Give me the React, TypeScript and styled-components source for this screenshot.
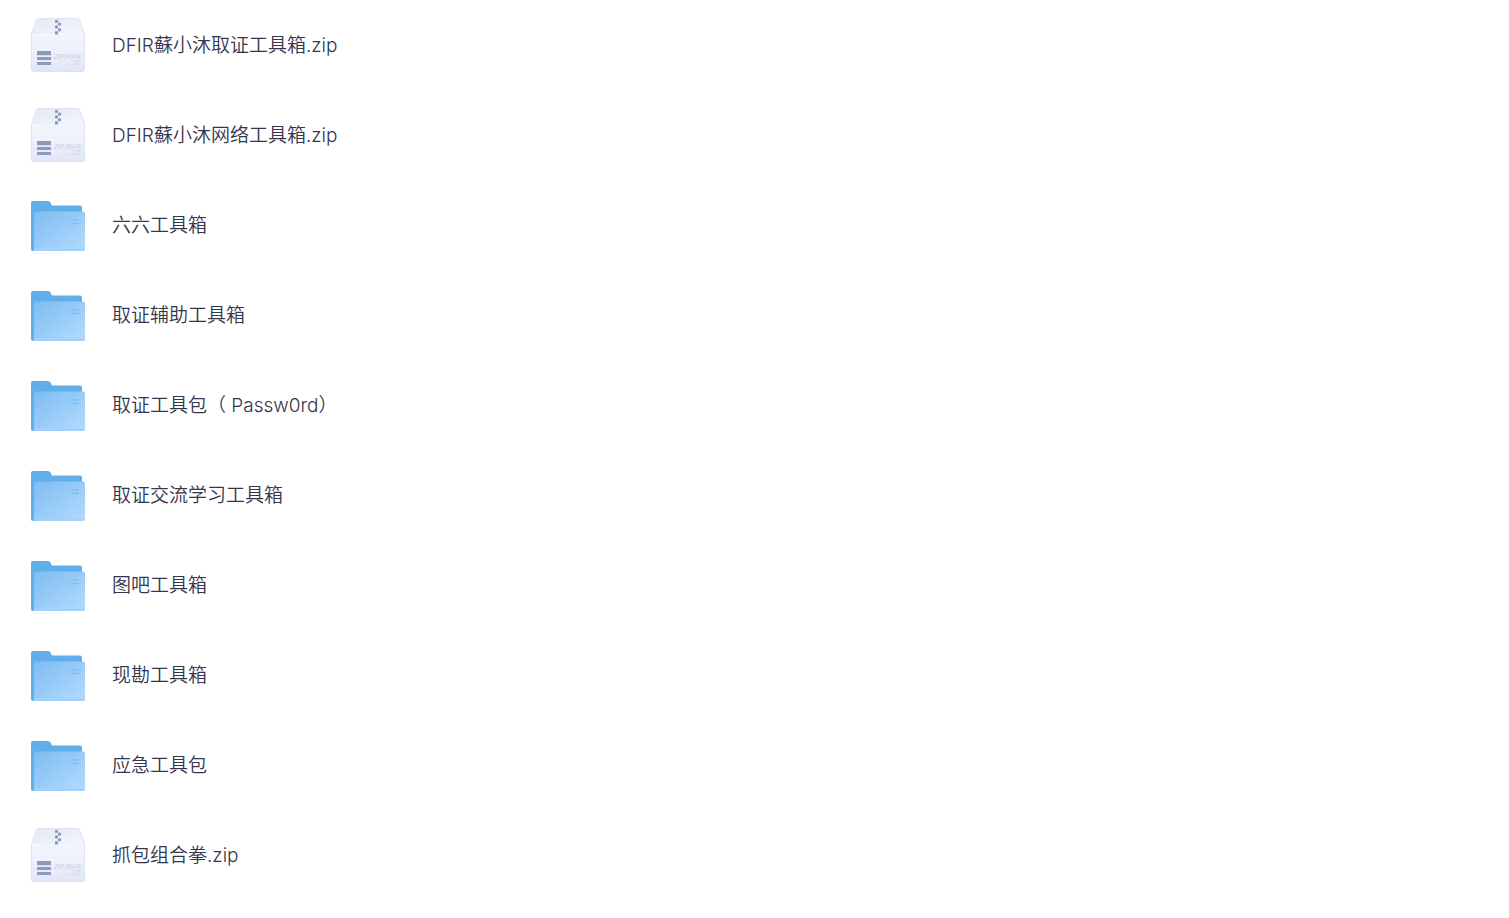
import React from 'react';
import styled, { createGlobalStyle } from 'styled-components';

const GlobalStyle = createGlobalStyle`
  * { box-sizing: border-box; }
  body { margin: 0; background: #fff; }
`;

const FileList = styled.ul`
  list-style: none;
  margin: 0;
  padding: 0 30px;
`;

const Row = styled.li`
  display: flex;
  align-items: center;
  gap: 26px;
  height: 90px;
`;

const Icon = styled.svg`
  flex: none;
  width: 56px;
  height: 56px;
`;

const FileName = styled.a`
  padding-top: 2px;
  color: #35364c;
  font-family: Inter, "Noto Sans CJK SC", sans-serif;
  font-size: 19px;
  font-weight: 350;
  line-height: 28px;
  text-decoration: none;
`;

const IconLabel = styled.text`
  fill: #d3d8ea;
  font-family: Roboto, sans-serif;
  font-size: 7px;
  font-style: italic;
  font-weight: 700;
`;

const ZipIcon = () => (
  <Icon viewBox="0 0 56 56" aria-hidden="true">
    <defs>
      <linearGradient id="box" x1="0" y1="0" x2="0" y2="1">
        <stop offset="0" stopColor="#f3f6fc" />
        <stop offset="0.6" stopColor="#eff2fb" />
        <stop offset="1" stopColor="#e2e5f6" />
      </linearGradient>
      <linearGradient id="lid" x1="0" y1="0" x2="1" y2="1">
        <stop offset="0" stopColor="#e3e9f4" />
        <stop offset="1" stopColor="#f2f5fc" />
      </linearGradient>
    </defs>
    <path d="M8.500 1.500h39q1.500 0 2 1.500L54.500 17v35q0 2.500-2.500 2.500H4Q1.500 54.500 1.500 52V17L6.500 3q.5-1.500 2-1.500z" fill="url(#box)" stroke="#dde2f0" />
    <path d="M8.500 2h39q1 0 1.500 1.500L54 17H2L7 3.500Q7.500 2 8.500 2z" fill="url(#lid)" />
    <path d="M2 17.500h52" stroke="#f5f8fe" />
    <path d="M25 3h3v2.800h-3zM28 5.800h3v2.800h-3zM25 8.600h3v2.800h-3zM28 11.400h3v2.800h-3zM25 14.200h3v3.200h-3z" fill="#8b9abd" />
    <path d="M7 34h14v4.300H7zM7 40h14v3H7zM7 45h14v3H7z" fill="#8b9abd" />
    <IconLabel x="24" y="42">ZIP/RAR/</IconLabel>
    <IconLabel x="36" y="48">...7Z</IconLabel>
  </Icon>
);

const FolderIcon = () => (
  <Icon viewBox="0 0 56 56" aria-hidden="true">
    <defs>
      <linearGradient id="front" x1="0" y1="0" x2="1" y2="1">
        <stop offset="0" stopColor="#7dbcf1" />
        <stop offset="1" stopColor="#b3dbff" />
      </linearGradient>
    </defs>
    <path d="M1 6q0-2 2-2h15q1.500 0 2.500 1.500L22 8.500h28q2 0 2 2V54H3q-2 0-2-2z" fill="#60aeea" />
    <path d="M4 16.500q0-2 2-2h47q2 0 2 2V52q0 2-2 2H3q1 0 1-2z" fill="url(#front)" />
    <path d="M4 51.500h51v.5q0 2-2 2H3q1 0 1-2z" fill="#a3d1fa" />
    <path d="M41.500 23h7.500M41.500 26.500h7.500" stroke="#7fbdf0" strokeWidth="1.400" />
  </Icon>
);

const files = [
  { name: 'DFIR蘇小沐取证工具箱.zip', zip: true },
  { name: 'DFIR蘇小沐网络工具箱.zip', zip: true },
  { name: '六六工具箱', zip: false },
  { name: '取证辅助工具箱', zip: false },
  { name: '取证工具包（ Passw0rd）', zip: false },
  { name: '取证交流学习工具箱', zip: false },
  { name: '图吧工具箱', zip: false },
  { name: '现勘工具箱', zip: false },
  { name: '应急工具包', zip: false },
  { name: '抓包组合拳.zip', zip: true },
];

export default function App() {
  return (
    <>
      <GlobalStyle />
      <FileList lang="zh-CN">
        {files.map((f) => (
          <Row key={f.name}>
            {f.zip ? <ZipIcon /> : <FolderIcon />}
            <FileName href="#">{f.name}</FileName>
          </Row>
        ))}
      </FileList>
    </>
  );
}
